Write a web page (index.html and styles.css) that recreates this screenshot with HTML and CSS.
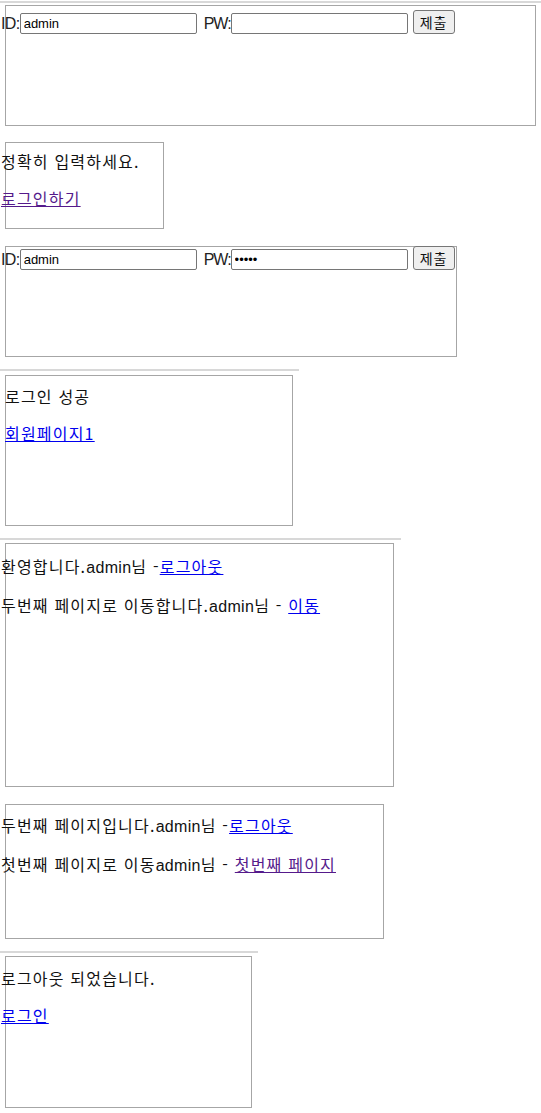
FILE: index.html
```html
<!DOCTYPE html>
<html lang="ko">
<head>
<meta charset="utf-8">
<title>로그인 예제</title>
<link rel="stylesheet" href="styles.css">
</head>
<body>
  <div class="rule rule-top"></div>
  <div class="frame f1">
    <form class="login-row">
      <label class="id">ID:</label><input class="field" type="text" value="admin">
      <label class="pw">PW:</label><input class="field" type="password" value="">
      <button type="button" class="btn">제출</button>
    </form>
  </div>

  <div class="frame f2">
    <div class="content">
      <p>정확히 입력하세요.</p>
      <p><a class="visited" href="#">로그인하기</a></p>
    </div>
  </div>

  <div class="frame f3">
    <form class="login-row row-tight">
      <label class="id">ID:</label><input class="field" type="text" value="admin">
      <label class="pw">PW:</label><input class="field" type="password" value="12345">
      <button type="button" class="btn">제출</button>
    </form>
  </div>

  <div class="rule r4"></div>
  <div class="frame f4">
    <div class="content">
      <p>로그인 성공</p>
      <p><a href="#">회원페이지1</a></p>
    </div>
  </div>

  <div class="rule r5"></div>
  <div class="frame f5">
    <div class="content">
      <p>환영합니다.<span class="latin">admin</span>님 -<a href="#">로그아웃</a></p>
      <p>두번째 페이지로 이동합니다.<span class="latin">admin</span>님 - <a href="#">이동</a></p>
    </div>
  </div>

  <div class="frame f6">
    <div class="content">
      <p>두번째 페이지입니다.<span class="latin">admin</span>님 -<a href="#">로그아웃</a></p>
      <p>첫번째 페이지로 이동<span class="latin">admin</span>님 - <a class="visited" href="#">첫번째 페이지</a></p>
    </div>
  </div>

  <div class="rule r7"></div>
  <div class="frame f7">
    <div class="content">
      <p>로그아웃 되었습니다.</p>
      <p><a href="#">로그인</a></p>
    </div>
  </div>
</body>
</html>
```

FILE: styles.css
```css
html, body {
  margin: 0;
  padding: 0;
  background: #ffffff;
}

body {
  font-family: "Noto Sans CJK KR", "Liberation Sans", sans-serif;
  font-size: 16px;
  color: #111111;
}

.rule {
  height: 2px;
  background: #d8d8d8;
}

.rule-top {
  margin-top: 1px;
  width: 541px;
}

.frame {
  box-sizing: border-box;
  margin-left: 5px;
  border: 1px solid #a6a6a6;
  background: #ffffff;
}

.f1 { margin-top: 2px; width: 531px; height: 121px; }
.f2 { margin-top: 16px; width: 159px; height: 87px; }
.f3 { margin-top: 17px; width: 452px; height: 111px; }
.r4 { margin-top: 12px; width: 299px; }
.f4 { margin-top: 4px; width: 288px; height: 151px; }
.r5 { margin-top: 12px; width: 401px; }
.f5 { margin-top: 3px; width: 389px; height: 244px; }
.f6 { margin-top: 17px; width: 379px; height: 135px; }
.r7 { margin-top: 12px; width: 258px; }
.f7 { margin-top: 3px; width: 247px; height: 152px; }

.login-row {
  display: flex;
  align-items: flex-end;
  margin: 3px 0 0 -5px;
  height: 25px;
  font-family: "Liberation Sans", "Noto Sans CJK KR", sans-serif;
  font-size: 16px;
  color: #222222;
}

.row-tight {
  margin-top: -1px;
  height: 24px;
}

.login-row label {
  line-height: 21px;
}

.login-row .id {
  letter-spacing: -0.6px;
}

.login-row .pw {
  margin-left: 7px;
  letter-spacing: -1px;
}

.field {
  box-sizing: border-box;
  width: 177px;
  height: 21px;
  margin: 0;
  padding: 1px 3px;
  border: 1px solid #767676;
  border-radius: 2px;
  font-family: "Liberation Sans", sans-serif;
  font-size: 13px;
  color: #000000;
  background: #ffffff;
}

.btn {
  box-sizing: border-box;
  width: 42px;
  height: 24px;
  margin-left: 5px;
  padding: 0;
  border: 1px solid #767676;
  border-radius: 3px;
  background: #efefef;
  font-family: "Noto Sans CJK KR", sans-serif;
  font-size: 14px;
  letter-spacing: 1px;
  color: #111111;
}

.content {
  margin-left: -5px;
  padding-top: 7px;
}

.f4 .content {
  margin-left: -1px;
  padding-top: 9px;
}

.f5 .content {
  padding-top: 11px;
}

.f7 .content {
  padding-top: 10px;
}

.f6 .content {
  padding-top: 9px;
}

.content p {
  margin: 0 0 15px 0;
  line-height: 22px;
  letter-spacing: 1.2px;
  white-space: nowrap;
}

.latin {
  font-family: "Liberation Sans", sans-serif;
  letter-spacing: 0.3px;
}

a {
  color: #0000ee;
  text-decoration: underline;
}

a.visited {
  color: #551a8b;
}
```
